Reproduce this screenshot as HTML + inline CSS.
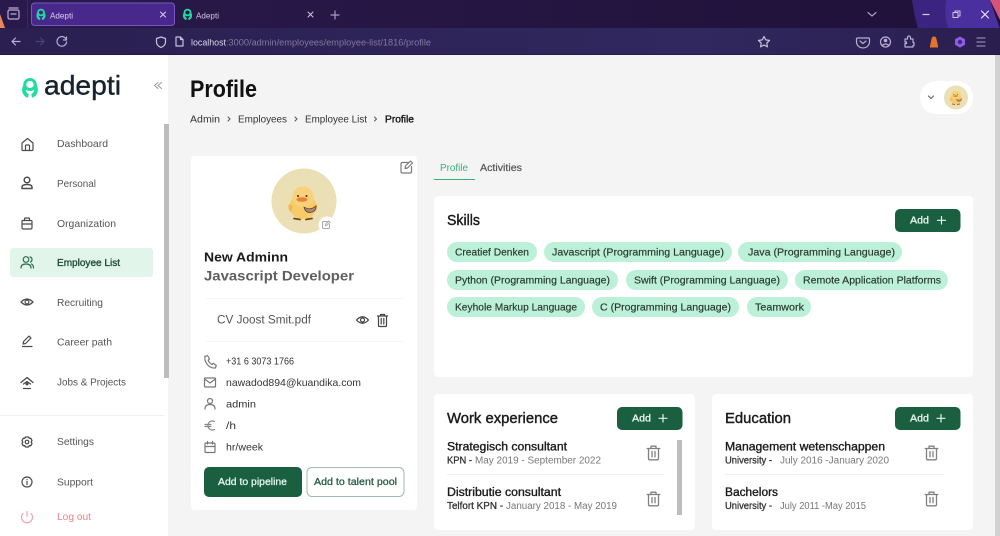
<!DOCTYPE html>
<html><head><meta charset="utf-8"><title>Adepti</title>
<style>
html,body{margin:0;padding:0;width:1000px;height:536px;overflow:hidden;background:#f4f4f4}
svg{display:block;font-family:"Liberation Sans",sans-serif;filter:blur(.25px)}
.i{fill:none;stroke:#4b4b4b;stroke-width:1.2;stroke-linecap:round;stroke-linejoin:round}
.n{font-size:10.5px;fill:#555}
.c{font-size:10.5px;fill:#1e4a38;stroke:#1e4a38;stroke-width:.35}
.d{font-size:10.5px;fill:#333}
.m{stroke:#111;stroke-width:.35}
.p{font-size:10.500px;fill:#283a32;stroke:#283a32;stroke-width:.18}
.g{font-size:10px;fill:#777}
.k{font-size:10px;fill:#333;stroke:#333;stroke-width:.3}
.t{font-size:11.5px;fill:#1a1a1a;stroke:#1a1a1a;stroke-width:.35}
.h{font-size:14.5px;fill:#1a1a1a;stroke:#1a1a1a;stroke-width:.4}
.a{font-size:10px;fill:#e3f5ea;stroke:#e3f5ea;stroke-width:.3}
</style></head><body>
<svg width="1000" height="536" viewBox="0 0 1000 536" xmlns="http://www.w3.org/2000/svg">
<defs>
<linearGradient id="tb" x1="0" x2="1" y1="0" y2="0"><stop offset="0" stop-color="#2a1a4c"/><stop offset=".5" stop-color="#251542"/><stop offset="1" stop-color="#1f1138"/></linearGradient>
<linearGradient id="ub" x1="0" x2="1" y1="0" y2="0"><stop offset="0" stop-color="#2a1f50"/><stop offset=".7" stop-color="#30285f"/><stop offset="1" stop-color="#2a1e4e"/></linearGradient>
<g id="tr"><path class="i" style="stroke:#808080;stroke-width:1.3" d="M-6.300-4.500H6.300M-2.500-4.500V-6.800H2.500V-4.500M-5-4.500V5.500a1.300 1.300 0 0 0 1.300 1.300H3.700a1.300 1.300 0 0 0 1.300-1.300V-4.500M-1.500-1.500V3.800M1.500-1.500V3.800"/></g>
<g id="duck">
<ellipse cx="0" cy="3.500" rx="13.500" ry="12.500" fill="#f7cb68"/><circle cx="0" cy="-6" r="10.500" fill="#f8d178"/>
<path d="M-14 1Q-16 6-12 9L-10 3ZM14 1Q15 6 12 9L10 3Z" fill="#f0b850"/>
<ellipse cx="-1" cy="-3.500" rx="5.500" ry="2.300" fill="#e8843a"/><circle cx="-5" cy="-7" r="1" fill="#4a2c14"/><circle cx="3.500" cy="-7" r="1" fill="#4a2c14"/>
<path d="M1 4Q7 8 13 3Q13 9 7 9.500Q2 9.500 1 4Z" fill="#a08a80" stroke="#6b3d20" stroke-width=".7"/>
<path d="M-9 15.500L-3 16.500M3 16.500L9 15.500" fill="none" stroke="#7a4520" stroke-width="1.800" stroke-linecap="round"/>
</g>
<g id="logo"><ellipse cx="0" cy="-3.500" rx="5.200" ry="5" fill="none" stroke="#1fdca0" stroke-width="3"/><path d="M-6.700-3C-9.500 3-7 8.500-2 9.800L-1.200 6C-3.500 5-4.500 3-3.800 0ZM6.700-3C9.500 3 7 8.500 2 9.800L1.200 6C3.500 5 4.500 3 3.800 0Z" fill="#1fdca0"/></g>
</defs>

<!-- browser chrome -->
<rect width="1000" height="29" fill="url(#tb)"/>
<path d="M0 14L5 28H0Z" fill="#e8875a"/>
<rect x="27" y="0" width="1" height="28" fill="#3a2a5c"/>
<path d="M912 0H946L948 29H918Q914 14 912 0Z" fill="#3a2480"/>
<path d="M946 0H990L1000 29H948Q944 14 946 0Z" fill="#4a2f9e"/>
<path d="M990 0L1000 0V20Z" fill="#d8537c"/>
<rect y="28" width="1000" height="27" fill="url(#ub)"/>
<rect y="54.500" width="1000" height="1" fill="#1e1438"/>
<rect x="8" y="10" width="11" height="9" rx="1.500" class="i" style="stroke:#b8aed6"/><path d="M9 8H18M11 14H16" class="i" style="stroke:#b8aed6"/>
<rect x="31.500" y="3" width="143" height="22.500" rx="3" fill="#49288c" stroke="#7558c0"/>
<g transform="translate(41,14.500) scale(.58)"><use href="#logo"/></g>
<text x="50" y="18.500" font-size="8.500" fill="#dcd4ee" textLength="23" lengthAdjust="spacingAndGlyphs">Adepti</text>
<path d="M160.500 12l5 5m0-5l-5 5" class="i" style="stroke:#d8d0ea;stroke-width:1"/>
<g transform="translate(187.500,14.500) scale(.58)"><use href="#logo"/></g>
<text x="196" y="18.500" font-size="8.500" fill="#cfc7e2" textLength="23" lengthAdjust="spacingAndGlyphs">Adepti</text>
<path d="M308 12l5 5m0-5l-5 5" class="i" style="stroke:#cfc7e2;stroke-width:1"/>
<path d="M335 11v8m-4-4h8" class="i" style="stroke:#a79cc6"/>
<path d="M868 12.500l4 3.500 4-3.500" class="i" style="stroke:#a79cc6"/>
<path d="M923 14.500h6" class="i" style="stroke:#cfc7e8"/>
<path d="M953 12.500h5v5h-5zM955 12.500v-1.500h5v5h-2" class="i" style="stroke:#cfc7e8;stroke-width:1"/>
<path d="M981.500 11l7 7m0-7l-7 7" class="i" style="stroke:#e8e2f6"/>
<path d="M20 41.500h-8m3.500-3.500l-3.500 3.500 3.500 3.500" class="i" style="stroke:#b8aed6"/>
<path d="M44 41.500h-8m4.500-3.500l3.500 3.500-3.500 3.500" class="i" style="stroke:#4c4274"/>
<path d="M66 39a4.800 4.800 0 1 0 .6 3M66.500 37v3h-3" class="i" style="stroke:#b8aed6"/>
<path d="M161 37l4.500 1.500v3.500q0 3.500-4.500 5.500q-4.500-2-4.500-5.500v-3.500z" class="i" style="stroke:#c8c0de"/>
<path d="M176 37h4.500l2.500 2.500v6.500h-7zM180.500 37v2.500h2.500" class="i" style="stroke:#c8c0de"/>
<text x="191" y="45.500" font-size="9" fill="#dcd6ec" textLength="35" lengthAdjust="spacingAndGlyphs">localhost</text>
<text x="226" y="45.500" font-size="9" fill="#82799f" textLength="205" lengthAdjust="spacingAndGlyphs">:3000/admin/employees/employee-list/1816/profile</text>
<path d="M764 36.500l1.700 3.400 3.800.5-2.700 2.700.6 3.700-3.400-1.800-3.400 1.800.6-3.700-2.700-2.700 3.800-.5z" class="i" style="stroke:#c8c0de"/>
<path d="M857.500 38h11q1 0 1 1v3a6 5.500 0 0 1-13 0v-3q0-1 1-1zM860 41l3 2.500 3-2.500" class="i" style="stroke:#b8aed6"/>
<circle cx="885.500" cy="42" r="5" class="i" style="stroke:#b8aed6"/><circle cx="885.500" cy="40.500" r="1.800" fill="#b8aed6"/><path d="M882 45.500q3.500-3 7 0" class="i" style="stroke:#b8aed6"/>
<path d="M905 39h2.500v-1.500a1.500 1.500 0 0 1 3 0v1.500h2.500v3.500h1v3h-1v1.500h-8v-3.500h1.500v-1.500h-1.500z" class="i" style="stroke:#b8aed6"/>
<path d="M934 36.500q2 0 2.500 2.500l1.500 7v1.500h-8v-1.500l1.500-7q.5-2.500 2.500-2.500z" fill="#e8722c"/>
<path d="M960 36.500l5 2.800v5.500l-5 2.800-5-2.800v-5.500z" fill="#8f5ce8"/><circle cx="960" cy="42" r="2.200" fill="#3f2a80"/>
<path d="M977 38h8M977 42h8M977 46h8" class="i" style="stroke:#8f85b4"/>

<!-- page -->
<rect y="55" width="1000" height="481" fill="#f4f4f4"/>
<rect x="995" y="55" width="5" height="481" fill="#d2d2d2"/>

<!-- sidebar -->
<rect y="55" width="168" height="481" fill="#fff"/>
<rect x="164" y="124" width="5" height="254" fill="#bdbdbd"/>
<rect y="415" width="164" height="1" fill="#efefef"/>
<g transform="translate(30,88)"><use href="#logo"/></g>
<text x="44" y="94.500" font-size="27" fill="#17222b" stroke="#17222b" stroke-width=".4" textLength="77" lengthAdjust="spacingAndGlyphs">adepti</text>
<path d="M158 82.500l-3.500 3 3.500 3M161.500 82.500l-3.500 3 3.500 3" class="i" style="stroke:#999;stroke-width:1"/>
<rect x="10" y="248" width="143" height="29" rx="3" fill="#e2f5ea"/>

<path class="i" d="M22 143l5.500-4.500L33 143v6.500q0 1-1 1H23q-1 0-1-1zM25.500 150.500V146q0-1 1-1h2q1 0 1 1v4.500"/>
<text class="n" x="57" y="147" textLength="51" lengthAdjust="spacingAndGlyphs">Dashboard</text>
<circle class="i" cx="27" cy="180" r="2.800" style="stroke-width:1.500"/><path class="i" style="stroke-width:1.500" d="M22 188.500v-1.500q0-2.500 5-2.500t5 2.500v1.500z"/>
<text class="n" x="57" y="187" textLength="39" lengthAdjust="spacingAndGlyphs">Personal</text>
<path class="i" d="M22 221.500q0-1 1-1h8q1 0 1 1v6q0 1.500-1.500 1.500h-7q-1.500 0-1.500-1.500zM24.500 220.500v-1.500q0-1 1-1h3q1 0 1 1v1.500M22 224h10"/>
<text class="n" x="57" y="227" textLength="59" lengthAdjust="spacingAndGlyphs">Organization</text>
<circle class="i" cx="26" cy="259.500" r="2.800" style="stroke:#2a6a4d"/><path class="i" style="stroke:#2a6a4d" d="M21 268q0-4 5-4t5 4M30 257q2 .5 2 2.500t-1.500 2.500M31.500 264q2 1 2 4"/>
<text class="c" x="57" y="266" textLength="63" lengthAdjust="spacingAndGlyphs">Employee List</text>
<path class="i" style="stroke-width:1.300" d="M21 302q6-6 12 0q-6 6-12 0z"/><circle class="i" cx="27" cy="302" r="1.900"/>
<text class="n" x="57" y="306" textLength="46" lengthAdjust="spacingAndGlyphs">Recruiting</text>
<path class="i" d="M23 344l.6-2.500 5.400-5.400 2 2-5.400 5.400zM22.500 346.500h9.500"/>
<text class="n" x="57" y="345.500" textLength="55" lengthAdjust="spacingAndGlyphs">Career path</text>
<path class="i" style="stroke-width:1.300" d="M21 382.500l6-5 6 5M23.500 384l3.500-2.500 3.500 2.500"/><circle cx="27" cy="384" r="1.500" fill="#4b4b4b"/><path class="i" d="M23.500 388.500h7"/>
<text class="n" x="57" y="385.500" textLength="69" lengthAdjust="spacingAndGlyphs">Jobs &amp; Projects</text>
<circle class="i" cx="27" cy="442" r="1.800"/><path class="i" style="stroke-width:1.300" d="M25.500 437l3 0 .8 1.300 1.500 0 1.200 2.200-.8 1.500.8 1.500-1.200 2.200-1.500 0-.8 1.300-3 0-.8-1.300-1.500 0-1.200-2.200.8-1.500-.8-1.500 1.200-2.200 1.500 0z"/>
<text class="n" x="57" y="445" textLength="37" lengthAdjust="spacingAndGlyphs">Settings</text>
<circle class="i" cx="27" cy="482" r="5"/><path class="i" d="M27 481.500v3M27 479.500v.2"/>
<text class="n" x="57" y="485.500" textLength="36" lengthAdjust="spacingAndGlyphs">Support</text>
<path d="M27 511.500v5M23 513.500a5.500 5.500 0 1 0 8 0" class="i" style="stroke:#f2a3ad"/>
<text x="57" y="520" font-size="10.500" fill="#ef7f8b" textLength="34" lengthAdjust="spacingAndGlyphs">Log out</text>

<!-- header -->
<text x="190" y="97" font-size="24" font-weight="bold" fill="#111" textLength="67" lengthAdjust="spacingAndGlyphs">Profile</text>
<text class="d" x="190" y="122.500" textLength="30" lengthAdjust="spacingAndGlyphs">Admin</text>
<path class="i" style="stroke:#555;stroke-width:1" d="M228 117l2 2-2 2"/>
<text class="d" x="238" y="122.500" textLength="49" lengthAdjust="spacingAndGlyphs">Employees</text>
<path class="i" style="stroke:#555;stroke-width:1" d="M295 117l2 2-2 2"/>
<text class="d" x="305" y="122.500" textLength="62" lengthAdjust="spacingAndGlyphs">Employee List</text>
<path class="i" style="stroke:#555;stroke-width:1" d="M374.500 117l2 2-2 2"/>
<text class="d m" x="385" y="122.500" style="fill:#111" textLength="29" lengthAdjust="spacingAndGlyphs">Profile</text>
<rect x="920" y="81" width="53" height="33" rx="16" fill="#fff"/>
<path class="i" style="stroke:#666" d="M928.500 96l2.500 2.500 2.500-2.500"/>
<circle cx="956" cy="97.500" r="12" fill="#eadfb5"/>
<g transform="translate(956,97.500) scale(.42)"><use href="#duck"/></g>

<!-- profile card -->
<rect x="191" y="156" width="226" height="354" rx="4" fill="#fff"/>
<path class="i" style="stroke:#7a7a7a" d="M409 162.500h-6.500q-1.500 0-1.500 1.500v7.500q0 1.500 1.500 1.500h7.500q1.500 0 1.500-1.500v-5M405 168.500l.5-2.500 5-5 2 2-5 5z"/>
<circle cx="304" cy="201" r="32.500" fill="#eadfb5"/>
<g transform="translate(303,203)"><use href="#duck"/></g>
<circle cx="327" cy="225" r="8.500" fill="#fff"/>
<path class="i" style="stroke:#aaa;stroke-width:1" d="M327 221.500h-3.500q-1 0-1 1v5q0 1 1 1h5q1 0 1-1v-3M325.500 225.500l.3-1.500 3-3 1.200 1.200-3 3z"/>
<text x="204" y="261.500" font-size="13" font-weight="bold" fill="#1a1a1a" textLength="84" lengthAdjust="spacingAndGlyphs">New Adminn</text>
<text x="204" y="280.500" font-size="14" font-weight="bold" fill="#5f5f5f" textLength="150" lengthAdjust="spacingAndGlyphs">Javascript Developer</text>
<rect x="206" y="298" width="197" height="1" fill="#f6f6f6"/><rect x="206" y="341" width="197" height="1" fill="#f6f6f6"/>
<text x="217" y="323.500" font-size="11.500" fill="#555" textLength="94" lengthAdjust="spacingAndGlyphs">CV Joost Smit.pdf</text>
<path class="i" style="stroke:#444" d="M356.500 320q6-6.500 12 0q-6 6.500-12 0z"/><circle class="i" style="stroke:#444" cx="362.500" cy="320" r="2"/>
<g transform="translate(382.500,320.500)"><path class="i" style="stroke:#444" d="M-5-4.500H5M-2-4.500V-6H2V-4.500M-4-4.500V5a1 1 0 0 0 1 1H3a1 1 0 0 0 1-1V-4.500M-1.300-2V3.500M1.300-2V3.500"/></g>

<path class="i" style="stroke:#777" d="M205 356.500l2.500-1 2 3.500-1.300 1.200q1 2.800 3.800 4.300l1.300-1.200 3 2.200-1 2.500q-4.800.5-8-3.500t-2.300-8.500z"/>
<text class="d" x="226" y="364.500" textLength="68" lengthAdjust="spacingAndGlyphs">+31 6 3073 1766</text>
<rect class="i" style="stroke:#777" x="204.500" y="378" width="11" height="9" rx="1"/><path class="i" style="stroke:#777" d="M204.500 379l5.500 4 5.500-4"/>
<text class="d" x="226" y="386" textLength="135" lengthAdjust="spacingAndGlyphs">nawadod894@kuandika.com</text>
<circle class="i" style="stroke:#777" cx="210" cy="401" r="2.500"/><path class="i" style="stroke:#777" d="M205 409q0-4.500 5-4.500t5 4.500"/>
<text class="d" x="226" y="407.500" textLength="30" lengthAdjust="spacingAndGlyphs">admin</text>
<path class="i" style="stroke:#888" d="M214.500 421.500a4.500 4.500 0 1 0 0 8M205 424.500h6M205 426.500h6"/>
<text class="d" x="226" y="429" textLength="10" lengthAdjust="spacingAndGlyphs">/h</text>
<rect class="i" style="stroke:#777" x="205" y="443" width="10" height="9.500" rx="1"/><path class="i" style="stroke:#777" d="M205 446.500h10M207.500 441.500v2.500M212.500 441.500v2.500"/>
<text class="d" x="226" y="450.500" textLength="37" lengthAdjust="spacingAndGlyphs">hr/week</text>
<rect x="204" y="467" width="98" height="30" rx="5" fill="#1a6040"/>
<text x="218" y="485" font-size="10.500" fill="#e3f5ea" stroke="#e3f5ea" stroke-width=".3" textLength="69" lengthAdjust="spacingAndGlyphs">Add to pipeline</text>
<rect x="307" y="467.500" width="97" height="29" rx="5" fill="#fff" stroke="#a5b8ae"/>
<text x="314" y="485" font-size="10.500" fill="#2a5e46" stroke="#2a5e46" stroke-width=".3" textLength="83" lengthAdjust="spacingAndGlyphs">Add to talent pool</text>

<!-- tabs -->
<text x="440" y="171" font-size="9.800" fill="#33b27f" textLength="28" lengthAdjust="spacingAndGlyphs">Profile</text>
<text x="480" y="171" font-size="10.500" fill="#555" stroke="#555" stroke-width=".2" textLength="42" lengthAdjust="spacingAndGlyphs">Activities</text>
<rect x="434" y="179" width="41" height="1" fill="#33b27f"/>

<!-- skills -->
<rect x="434" y="196" width="539" height="181" rx="4" fill="#fff"/>
<text class="h" x="447" y="225" textLength="33" lengthAdjust="spacingAndGlyphs">Skills</text>
<rect x="895" y="209" width="65.500" height="23" rx="5" fill="#1a6040"/>
<text class="a" x="910" y="223.500" textLength="19" lengthAdjust="spacingAndGlyphs">Add</text>
<path d="M941.500 216.500v7.500M937.500 220.300h8" class="i" style="stroke:#e3f5ea"/>
<g fill="#bcf0d8">
<rect x="447" y="242" width="90" height="20" rx="10"/><rect x="544" y="242" width="188" height="20" rx="10"/><rect x="738" y="242" width="164" height="20" rx="10"/>
<rect x="447" y="270" width="171" height="20" rx="10"/><rect x="626" y="270" width="162" height="20" rx="10"/><rect x="795" y="270" width="153" height="20" rx="10"/>
<rect x="447" y="297" width="138" height="20" rx="10"/><rect x="592" y="297" width="147" height="20" rx="10"/><rect x="747" y="297" width="64" height="20" rx="10"/>
</g>
<text class="p" x="455" y="255.500" textLength="74" lengthAdjust="spacingAndGlyphs">Creatief Denken</text>
<text class="p" x="552" y="255.500" textLength="172" lengthAdjust="spacingAndGlyphs">Javascript (Programming Language)</text>
<text class="p" x="748" y="255.500" textLength="147" lengthAdjust="spacingAndGlyphs">Java (Programming Language)</text>
<text class="p" x="455" y="283.500" textLength="155" lengthAdjust="spacingAndGlyphs">Python (Programming Language)</text>
<text class="p" x="634" y="283.500" textLength="146" lengthAdjust="spacingAndGlyphs">Swift (Programming Language)</text>
<text class="p" x="803" y="283.500" textLength="138" lengthAdjust="spacingAndGlyphs">Remote Application Platforms</text>
<text class="p" x="455" y="310.500" textLength="122" lengthAdjust="spacingAndGlyphs">Keyhole Markup Language</text>
<text class="p" x="600" y="310.500" textLength="131" lengthAdjust="spacingAndGlyphs">C (Programming Language)</text>
<text class="p" x="755" y="310.500" textLength="49" lengthAdjust="spacingAndGlyphs">Teamwork</text>

<!-- work -->
<rect x="434" y="394" width="261" height="136" rx="4" fill="#fff"/>
<text class="h" x="447" y="423" textLength="111" lengthAdjust="spacingAndGlyphs">Work experience</text>
<rect x="617" y="407" width="65.500" height="23" rx="5" fill="#1a6040"/>
<text class="a" x="632" y="421.500" textLength="19" lengthAdjust="spacingAndGlyphs">Add</text>
<path d="M663 414.500v7.500M659 418.300h8" class="i" style="stroke:#e3f5ea"/>
<rect x="677" y="440" width="5" height="75" fill="#bdbdbd"/>
<text class="t" x="447" y="450.500" textLength="120" lengthAdjust="spacingAndGlyphs">Strategisch consultant</text>
<text class="k" x="447" y="463.500" textLength="25" lengthAdjust="spacingAndGlyphs">KPN -</text>
<text class="g" x="475" y="463.500" textLength="126" lengthAdjust="spacingAndGlyphs">May 2019 - September 2022</text>
<use href="#tr" x="653.500" y="453"/>
<rect x="447" y="474" width="217" height="1" fill="#f0f0f0"/>
<text class="t" x="447" y="496" textLength="114" lengthAdjust="spacingAndGlyphs">Distributie consultant</text>
<text class="k" x="447" y="509" textLength="56" lengthAdjust="spacingAndGlyphs">Telfort KPN -</text>
<text class="g" x="506" y="509" textLength="111" lengthAdjust="spacingAndGlyphs">January 2018 - May 2019</text>
<use href="#tr" x="653.500" y="499"/>

<!-- education -->
<rect x="712" y="394" width="261" height="136" rx="4" fill="#fff"/>
<text class="h" x="725" y="423" textLength="66" lengthAdjust="spacingAndGlyphs">Education</text>
<rect x="895" y="407" width="65.500" height="23" rx="5" fill="#1a6040"/>
<text class="a" x="910" y="421.500" textLength="19" lengthAdjust="spacingAndGlyphs">Add</text>
<path d="M941 414.500v7.500M937 418.300h8" class="i" style="stroke:#e3f5ea"/>
<text class="t" x="725" y="450.500" textLength="160" lengthAdjust="spacingAndGlyphs">Management wetenschappen</text>
<text class="k" x="725" y="463.500" textLength="47" lengthAdjust="spacingAndGlyphs">University -</text>
<text class="g" x="780" y="463.500" textLength="109" lengthAdjust="spacingAndGlyphs">July 2016 -January 2020</text>
<use href="#tr" x="931.500" y="453"/>
<rect x="725" y="474" width="219" height="1" fill="#f0f0f0"/>
<text class="t" x="725" y="496" textLength="53" lengthAdjust="spacingAndGlyphs">Bachelors</text>
<text class="k" x="725" y="509" textLength="47" lengthAdjust="spacingAndGlyphs">University -</text>
<text class="g" x="780" y="509" textLength="86" lengthAdjust="spacingAndGlyphs">July 2011 -May 2015</text>
<use href="#tr" x="931.500" y="499"/>
</svg>
</body></html>
